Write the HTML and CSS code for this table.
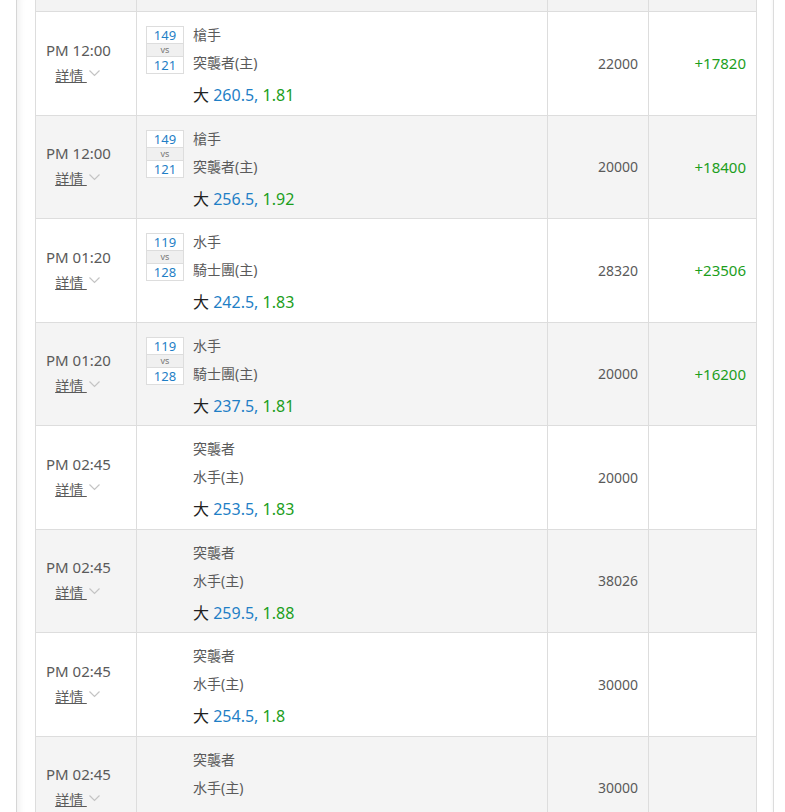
FILE: index.html
```html
<!DOCTYPE html>
<html lang="zh-Hant">
<head>
<meta charset="utf-8">
<link rel="stylesheet" href="styles.css">
</head>
<body>
<div class="card">
  <div class="grid">
    <div class="row head">
      <div class="c c1"></div><div class="c c2"></div><div class="c c3"></div><div class="c c4"></div>
    </div>

    <div class="row">
      <div class="c c1"><div class="tm"><div class="time">PM 12:00</div><div class="det"><span class="lk">詳情&nbsp;</span><svg class="chev" viewBox="0 0 11 7" width="11" height="7"><path d="M0.5 0.5 L5.5 5.5 L10.5 0.5" fill="none" stroke="#c4c4c4" stroke-width="1.2"/></svg></div></div></div>
      <div class="c c2"><div class="box"><div class="n">149</div><div class="vs">vs</div><div class="n">121</div></div><div class="info"><div class="team">槍手</div><div class="team">突襲者(主)</div><div class="bet"><span class="k">大</span> <span class="b">260.5,</span> <span class="g">1.81</span></div></div></div>
      <div class="c c3">22000</div>
      <div class="c c4">+17820</div>
    </div>

    <div class="row alt">
      <div class="c c1"><div class="tm"><div class="time">PM 12:00</div><div class="det"><span class="lk">詳情&nbsp;</span><svg class="chev" viewBox="0 0 11 7" width="11" height="7"><path d="M0.5 0.5 L5.5 5.5 L10.5 0.5" fill="none" stroke="#c4c4c4" stroke-width="1.2"/></svg></div></div></div>
      <div class="c c2"><div class="box"><div class="n">149</div><div class="vs">vs</div><div class="n">121</div></div><div class="info"><div class="team">槍手</div><div class="team">突襲者(主)</div><div class="bet"><span class="k">大</span> <span class="b">256.5,</span> <span class="g">1.92</span></div></div></div>
      <div class="c c3">20000</div>
      <div class="c c4">+18400</div>
    </div>

    <div class="row">
      <div class="c c1"><div class="tm"><div class="time">PM 01:20</div><div class="det"><span class="lk">詳情&nbsp;</span><svg class="chev" viewBox="0 0 11 7" width="11" height="7"><path d="M0.5 0.5 L5.5 5.5 L10.5 0.5" fill="none" stroke="#c4c4c4" stroke-width="1.2"/></svg></div></div></div>
      <div class="c c2"><div class="box"><div class="n">119</div><div class="vs">vs</div><div class="n">128</div></div><div class="info"><div class="team">水手</div><div class="team">騎士團(主)</div><div class="bet"><span class="k">大</span> <span class="b">242.5,</span> <span class="g">1.83</span></div></div></div>
      <div class="c c3">28320</div>
      <div class="c c4">+23506</div>
    </div>

    <div class="row alt">
      <div class="c c1"><div class="tm"><div class="time">PM 01:20</div><div class="det"><span class="lk">詳情&nbsp;</span><svg class="chev" viewBox="0 0 11 7" width="11" height="7"><path d="M0.5 0.5 L5.5 5.5 L10.5 0.5" fill="none" stroke="#c4c4c4" stroke-width="1.2"/></svg></div></div></div>
      <div class="c c2"><div class="box"><div class="n">119</div><div class="vs">vs</div><div class="n">128</div></div><div class="info"><div class="team">水手</div><div class="team">騎士團(主)</div><div class="bet"><span class="k">大</span> <span class="b">237.5,</span> <span class="g">1.81</span></div></div></div>
      <div class="c c3">20000</div>
      <div class="c c4">+16200</div>
    </div>

    <div class="row">
      <div class="c c1"><div class="tm"><div class="time">PM 02:45</div><div class="det"><span class="lk">詳情&nbsp;</span><svg class="chev" viewBox="0 0 11 7" width="11" height="7"><path d="M0.5 0.5 L5.5 5.5 L10.5 0.5" fill="none" stroke="#c4c4c4" stroke-width="1.2"/></svg></div></div></div>
      <div class="c c2"><div class="box empty"></div><div class="info"><div class="team">突襲者</div><div class="team">水手(主)</div><div class="bet"><span class="k">大</span> <span class="b">253.5,</span> <span class="g">1.83</span></div></div></div>
      <div class="c c3">20000</div>
      <div class="c c4"></div>
    </div>

    <div class="row alt">
      <div class="c c1"><div class="tm"><div class="time">PM 02:45</div><div class="det"><span class="lk">詳情&nbsp;</span><svg class="chev" viewBox="0 0 11 7" width="11" height="7"><path d="M0.5 0.5 L5.5 5.5 L10.5 0.5" fill="none" stroke="#c4c4c4" stroke-width="1.2"/></svg></div></div></div>
      <div class="c c2"><div class="box empty"></div><div class="info"><div class="team">突襲者</div><div class="team">水手(主)</div><div class="bet"><span class="k">大</span> <span class="b">259.5,</span> <span class="g">1.88</span></div></div></div>
      <div class="c c3">38026</div>
      <div class="c c4"></div>
    </div>

    <div class="row">
      <div class="c c1"><div class="tm"><div class="time">PM 02:45</div><div class="det"><span class="lk">詳情&nbsp;</span><svg class="chev" viewBox="0 0 11 7" width="11" height="7"><path d="M0.5 0.5 L5.5 5.5 L10.5 0.5" fill="none" stroke="#c4c4c4" stroke-width="1.2"/></svg></div></div></div>
      <div class="c c2"><div class="box empty"></div><div class="info"><div class="team">突襲者</div><div class="team">水手(主)</div><div class="bet"><span class="k">大</span> <span class="b">254.5,</span> <span class="g">1.8</span></div></div></div>
      <div class="c c3">30000</div>
      <div class="c c4"></div>
    </div>

    <div class="row alt">
      <div class="c c1"><div class="tm"><div class="time">PM 02:45</div><div class="det"><span class="lk">詳情&nbsp;</span><svg class="chev" viewBox="0 0 11 7" width="11" height="7"><path d="M0.5 0.5 L5.5 5.5 L10.5 0.5" fill="none" stroke="#c4c4c4" stroke-width="1.2"/></svg></div></div></div>
      <div class="c c2"><div class="box empty"></div><div class="info"><div class="team">突襲者</div><div class="team">水手(主)</div><div class="bet"><span class="k">大</span> <span class="b">255.5,</span> <span class="g">1.83</span></div></div></div>
      <div class="c c3">30000</div>
      <div class="c c4"></div>
    </div>
  </div>
</div>
</body>
</html>
```

FILE: styles.css
```css
html, body {
  margin: 0;
  padding: 0;
  background: #fff;
  overflow: hidden;
}
body {
  font-family: "Noto Sans", "Noto Sans CJK TC", sans-serif;
  color: #5a5a5a;
}
.card {
  margin-left: 16px;
  width: 758px;
  box-sizing: border-box;
  border-left: 1px solid #d6d6d6;
  border-right: 1px solid #dcdcdc;
  box-shadow: inset 8px 0 7px -6px rgba(0,0,0,0.07), inset -3px 0 3px -2px rgba(0,0,0,0.04);
  padding: 0 16px 0 18px;
  min-height: 900px;
}
.grid {
  border-left: 1px solid #ddd;
  width: 722px;
  box-sizing: border-box;
}
.row {
  display: grid;
  grid-template-columns: 101px 411px 101px 108px;
}
.row.alt { background: #f4f4f4; }
.row.head { background: #f3f3f3; }
.row.head .c { height: 12px; }
.c {
  box-sizing: border-box;
  border-right: 1px solid #ddd;
  border-bottom: 1px solid #ddd;
}
.c1 {
  display: flex;
  align-items: center;
  padding-left: 10px;
}
.tm {
  display: flex;
  flex-direction: column;
  align-items: center;
}
.time {
  font-size: 15px;
  line-height: 22px;
  margin-top: -2px;
}
.det {
  font-size: 14px;
  line-height: 20px;
  margin-top: 5px;
  margin-left: -2px;
  display: flex;
  align-items: center;
}
.lk { text-decoration: underline; }
.chev { margin-left: 2px; margin-top: -4px; }
.c2 {
  display: flex;
  padding: 9px 9px 1.52px 9px;
}
.box {
  width: 38px;
  box-sizing: border-box;
  border: 1px solid #ddd;
  margin-top: 5px;
  align-self: flex-start;
  text-align: center;
  background: #fff;
  margin-right: 9px;
}
.box.empty { border-color: transparent; background: none; height: 48px; }
.n {
  font-size: 13px;
  line-height: 16px;
  color: #1f7fc6;
}
.vs {
  font-size: 9px;
  line-height: 12px;
  color: #777;
  background: #f0f0f0;
  border-top: 1px solid #ddd;
  border-bottom: 1px solid #ddd;
}
.info { display: flex; flex-direction: column; }
.team {
  font-size: 14px;
  line-height: 28px;
}
.bet {
  font-size: 16px;
  line-height: 36px;
}
.k { color: #222; }
.b { color: #1f7fc6; }
.g { color: #1c9e1c; }
.c3, .c4 {
  display: flex;
  align-items: center;
  justify-content: flex-end;
  padding-right: 10px;
}
.c3 { font-size: 14px; }
.c4 { font-size: 15px; color: #1c9e1c; }
```
